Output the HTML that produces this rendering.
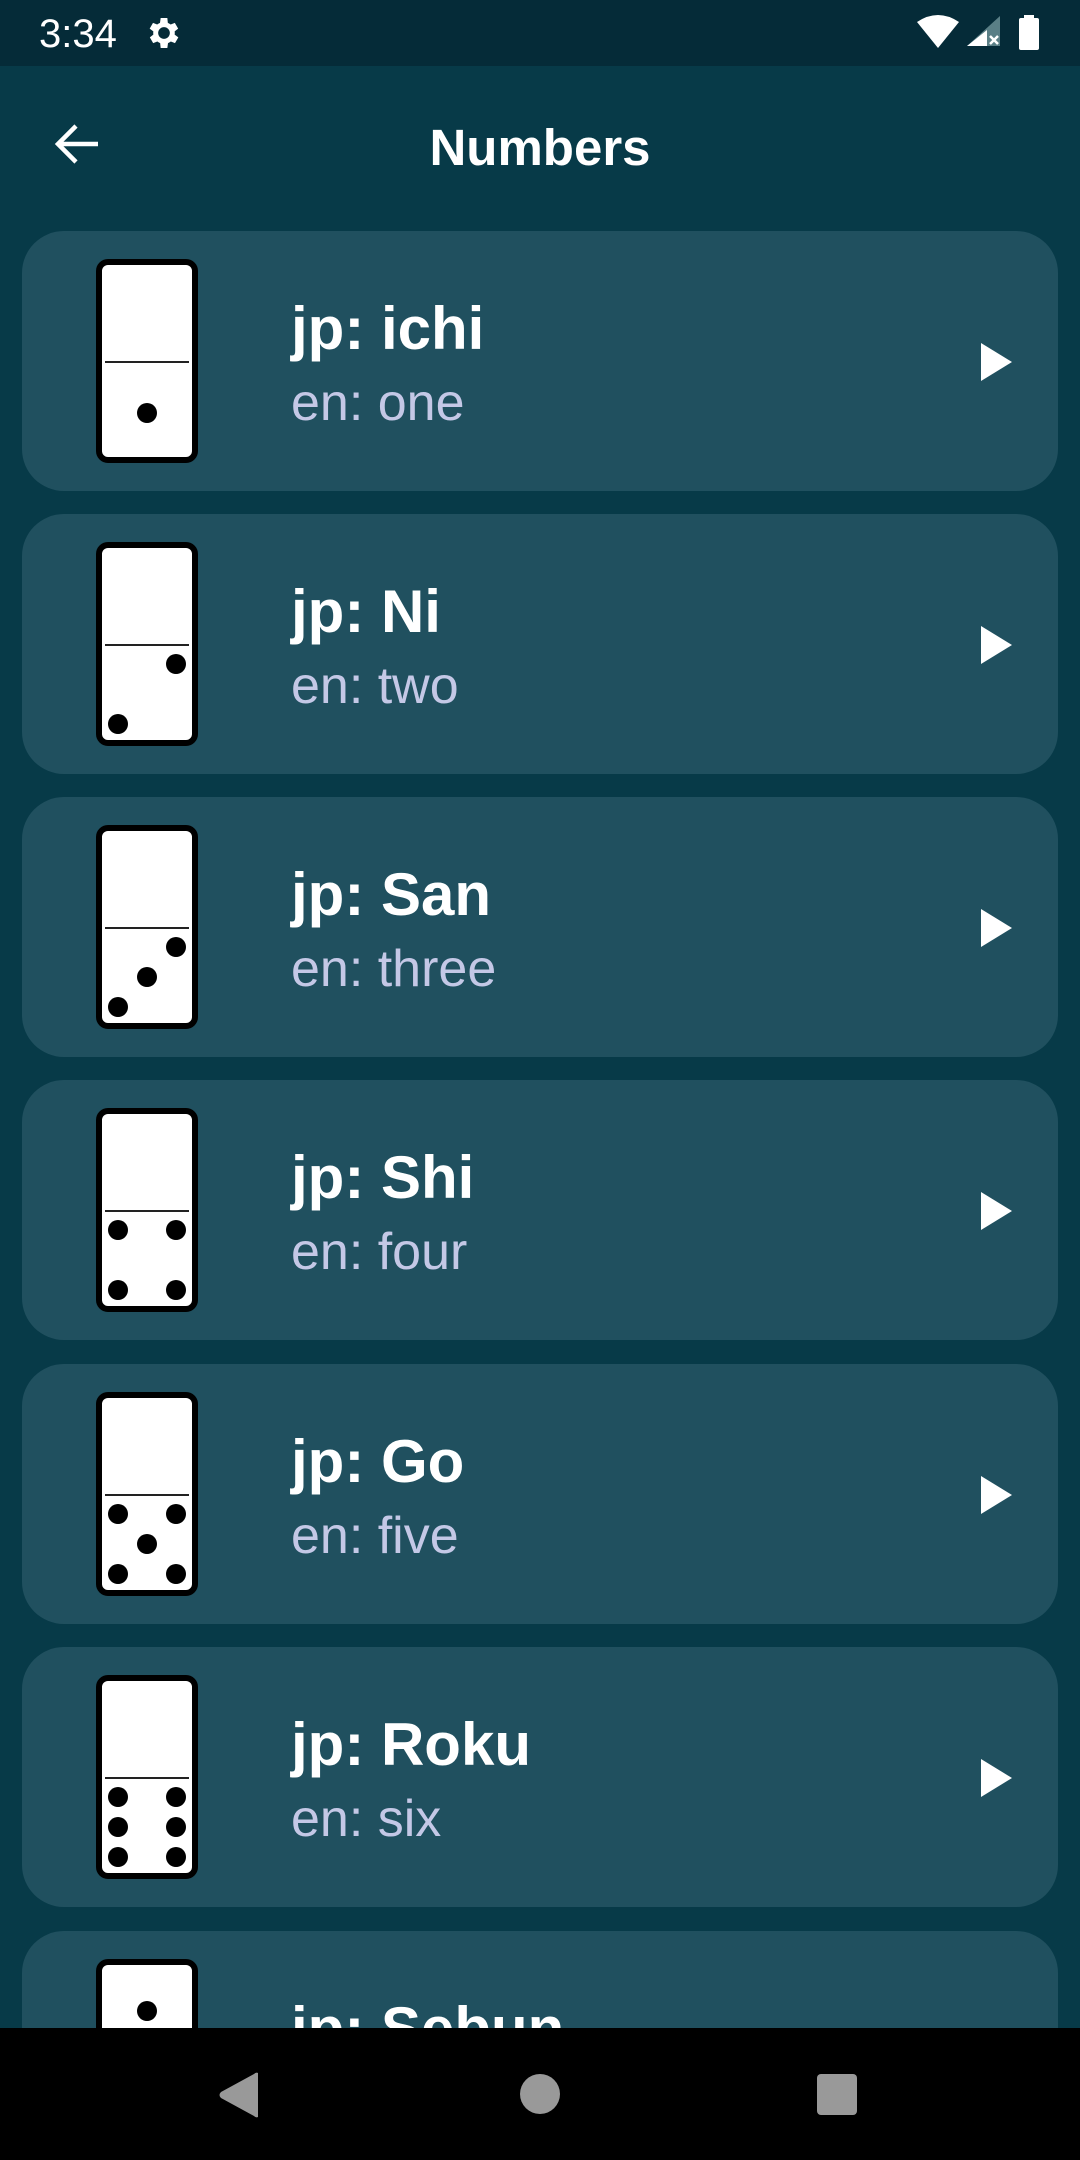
<!DOCTYPE html>
<html><head><meta charset="utf-8"><style>
*{margin:0;padding:0;box-sizing:border-box}
html,body{width:1080px;height:2160px;overflow:hidden;background:#073a48;font-family:"Liberation Sans",sans-serif}
#wrap{position:relative;width:1080px;height:2160px;overflow:hidden;background:#073a48}
.sb{position:absolute;left:0;top:0;width:1080px;height:66px;background:#052b38}
.card{position:absolute;left:22px;width:1036px;height:260px;background:#20505f;border-radius:42px}
.dom{position:absolute;left:74px;top:28px;width:102px;height:204px;background:#fff;border:6px solid #000;border-radius:12px}
.dom .ln{position:absolute;left:3px;right:3px;top:96px;height:2px;background:#222}
.dot{position:absolute;width:20px;height:20px;border-radius:50%;background:#000;margin:-10px 0 0 -10px}
.jp{position:absolute;left:269px;top:68px;font-size:60px;font-weight:bold;color:#fff;line-height:1}
.en{position:absolute;left:269px;top:146px;font-size:52px;color:#c4c8e6;line-height:1}
.play{position:absolute;left:959px;top:112px;width:0;height:0;border-top:19px solid transparent;border-bottom:19px solid transparent;border-left:31px solid #fff}
.nav{position:absolute;left:0;top:2028px;width:1080px;height:132px;background:#000}
</style></head><body><div id="wrap">
<div class="sb">
<div style="position:absolute;left:39px;top:12px;font-size:40px;color:#fff">3:34</div>
<svg style="position:absolute;left:144px;top:13px" width="40" height="40" viewBox="0 0 24 24"><path fill="#fff" d="M19.4 13a7.5 7.5 0 0 0 0-2l2.1-1.6-2-3.5-2.5 1a7 7 0 0 0-1.7-1L15 3h-4l-.4 2.9a7 7 0 0 0-1.7 1l-2.5-1-2 3.5L6.6 11a7.5 7.5 0 0 0 0 2l-2.1 1.6 2 3.5 2.5-1a7 7 0 0 0 1.7 1L11 21h4l.4-2.9a7 7 0 0 0 1.7-1l2.5 1 2-3.5zM13 15.5a3.5 3.5 0 1 1 0-7 3.5 3.5 0 0 1 0 7z" transform="translate(-1 0)"/></svg>
<svg style="position:absolute;left:915px;top:14px" width="130" height="38" viewBox="0 0 130 38">
<path d="M2 8 Q23 -6 44 8 L23 34 Z" fill="#fff"/>
<path d="M85 2 L85 32 L52 32 Z" fill="#5a7f86"/>
<path d="M72 16 L72 32 L52 32 Z" fill="#fff"/>
<path d="M75 22 L83 30 M83 22 L75 30" stroke="#fff" stroke-width="2.5"/>
<rect x="104" y="4" width="20" height="32" rx="2" fill="#fff"/><rect x="109" y="1" width="10" height="4" fill="#fff"/>
</svg>
</div>
<svg style="position:absolute;left:52px;top:120px" width="50" height="48" viewBox="0 0 50 48"><path d="M46 24H8M24 6L6 24l18 18" stroke="#fff" stroke-width="4.5" fill="none"/></svg>
<div style="position:absolute;left:0;width:1080px;text-align:center;top:118px;font-size:51px;font-weight:bold;color:#fff">Numbers</div>

<div class="card" style="top:231px"><div class="dom"><div class="ln"></div><div class="dot" style="left:45px;top:148px"></div></div><div class="jp">jp: ichi</div><div class="en">en: one</div><div class="play"></div></div>
<div class="card" style="top:514px"><div class="dom"><div class="ln"></div><div class="dot" style="left:74px;top:116px"></div><div class="dot" style="left:16px;top:176px"></div></div><div class="jp">jp: Ni</div><div class="en">en: two</div><div class="play"></div></div>
<div class="card" style="top:797px"><div class="dom"><div class="ln"></div><div class="dot" style="left:74px;top:116px"></div><div class="dot" style="left:45px;top:146px"></div><div class="dot" style="left:16px;top:176px"></div></div><div class="jp">jp: San</div><div class="en">en: three</div><div class="play"></div></div>
<div class="card" style="top:1080px"><div class="dom"><div class="ln"></div><div class="dot" style="left:16px;top:116px"></div><div class="dot" style="left:74px;top:116px"></div><div class="dot" style="left:16px;top:176px"></div><div class="dot" style="left:74px;top:176px"></div></div><div class="jp">jp: Shi</div><div class="en">en: four</div><div class="play"></div></div>
<div class="card" style="top:1364px"><div class="dom"><div class="ln"></div><div class="dot" style="left:16px;top:116px"></div><div class="dot" style="left:74px;top:116px"></div><div class="dot" style="left:45px;top:146px"></div><div class="dot" style="left:16px;top:176px"></div><div class="dot" style="left:74px;top:176px"></div></div><div class="jp">jp: Go</div><div class="en">en: five</div><div class="play"></div></div>
<div class="card" style="top:1647px"><div class="dom"><div class="ln"></div><div class="dot" style="left:16px;top:116px"></div><div class="dot" style="left:74px;top:116px"></div><div class="dot" style="left:16px;top:146px"></div><div class="dot" style="left:74px;top:146px"></div><div class="dot" style="left:16px;top:176px"></div><div class="dot" style="left:74px;top:176px"></div></div><div class="jp">jp: Roku</div><div class="en">en: six</div><div class="play"></div></div>
<div class="card" style="top:1931px;height:229px;border-radius:42px 42px 0 0"><div class="dom"><div class="ln"></div><div class="dot" style="left:45px;top:46px"></div></div><div class="jp">jp: Sebun</div></div>

<div class="nav">
<svg style="position:absolute;left:218px;top:44px" width="42" height="46" viewBox="0 0 42 46"><path d="M40 1 L40 45 Q38 46 36 44 L3 26 Q0 23 3 20 L36 2 Q38 0 40 1Z" fill="#999"/></svg>
<div style="position:absolute;left:520px;top:46px;width:40px;height:40px;border-radius:50%;background:#999"></div>
<div style="position:absolute;left:817px;top:46px;width:40px;height:41px;border-radius:4px;background:#999"></div>
</div>
</div></body></html>
